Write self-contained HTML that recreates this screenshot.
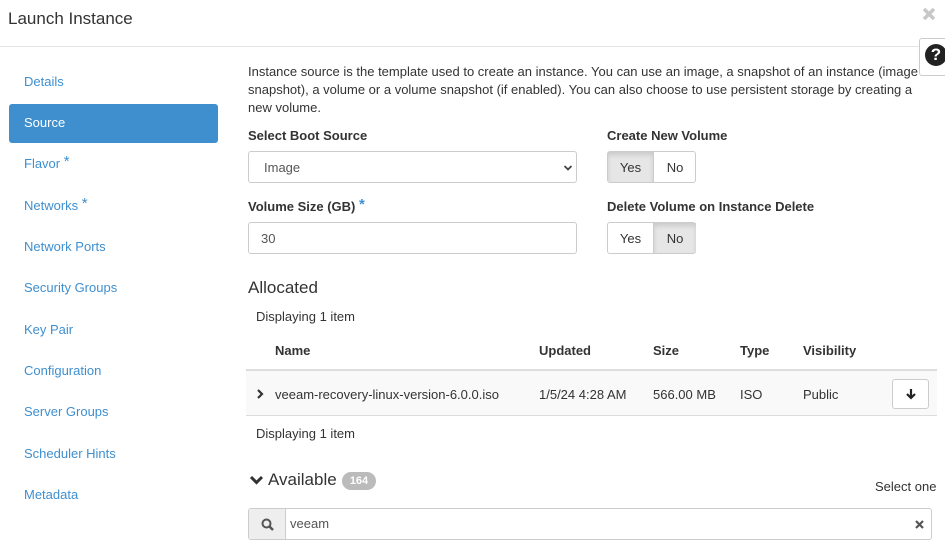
<!DOCTYPE html>
<html><head><style>
*{box-sizing:border-box;margin:0;padding:0}
body{width:945px;height:556px;overflow:hidden;background:#fff;font-family:"Liberation Sans",sans-serif;font-size:13px;color:#333;position:relative}
.a{position:absolute}
.nav{position:absolute;left:24px;color:#3f8fcf;font-size:13px}
.lbl{font-weight:bold;font-size:13px;color:#333}
.star{color:#3f8fcf;font-size:15px;vertical-align:top;position:relative;top:-3px}
.box{border:1px solid #ccc;border-radius:3px;background:#fff}
.btn{position:absolute;top:0;height:100%;display:flex;align-items:center;justify-content:center;font-size:13px}
</style></head><body>
<div class="a" style="left:8px;top:9px;font-size:17px;color:#333">Launch Instance</div>
<svg class="a" style="left:922px;top:7px" width="14" height="14"><path d="M2 2 L12 12 M12 2 L2 12" stroke="#c8c8c8" stroke-width="3.5"/></svg>
<div class="a" style="left:0;top:46px;width:920px;height:1px;background:#e5e5e5"></div>
<div class="a" style="left:919px;top:38px;width:30px;height:38px;border:1px solid #ccc;border-radius:3px;background:#fff"></div>
<div class="a" style="left:925px;top:44px;width:22px;height:22px;border-radius:50%;background:#222;color:#fff;font-weight:bold;font-size:17px;text-align:center;line-height:22px">?</div>

<div class="nav" style="top:74px">Details</div>
<div class="a" style="left:9px;top:104px;width:209px;height:39px;background:#3f8fcf;border-radius:3px"></div>
<div class="nav" style="top:115px;color:#fff">Source</div>
<div class="nav" style="top:156px">Flavor <span class="star">*</span></div>
<div class="nav" style="top:198px">Networks <span class="star">*</span></div>
<div class="nav" style="top:239px">Network Ports</div>
<div class="nav" style="top:280px">Security Groups</div>
<div class="nav" style="top:322px">Key Pair</div>
<div class="nav" style="top:363px">Configuration</div>
<div class="nav" style="top:404px">Server Groups</div>
<div class="nav" style="top:446px">Scheduler Hints</div>
<div class="nav" style="top:487px">Metadata</div>

<div class="a" style="left:248px;top:63px;width:675px;line-height:18px">Instance source is the template used to create an instance. You can use an image, a snapshot of an instance (image snapshot), a volume or a volume snapshot (if enabled). You can also choose to use persistent storage by creating a new volume.</div>

<div class="a lbl" style="left:248px;top:128px">Select Boot Source</div>
<div class="a box" style="left:248px;top:151px;width:329px;height:32px"><span class="a" style="left:15px;top:8px;color:#555">Image</span><svg class="a" style="left:314px;top:12px" width="10" height="8"><path d="M1.5 2 L5 5.5 L8.5 2" stroke="#444" stroke-width="1.8" fill="none"/></svg></div>
<div class="a lbl" style="left:607px;top:128px">Create New Volume</div>
<div class="a box" style="left:607px;top:151px;width:89px;height:32px"><div class="btn" style="left:0;width:46px;background:#e6e6e6;border-right:1px solid #ccc;box-shadow:inset 0 3px 5px rgba(0,0,0,.12)">Yes</div><div class="btn" style="left:46px;width:42px">No</div></div>

<div class="a lbl" style="left:248px;top:199px">Volume Size (GB) <span class="star">*</span></div>
<div class="a box" style="left:248px;top:222px;width:329px;height:32px"><span class="a" style="left:12px;top:8px;color:#555">30</span></div>
<div class="a lbl" style="left:607px;top:199px">Delete Volume on Instance Delete</div>
<div class="a box" style="left:607px;top:222px;width:89px;height:32px"><div class="btn" style="left:0;width:46px;border-right:1px solid #ccc">Yes</div><div class="btn" style="left:46px;width:42px;background:#e6e6e6;box-shadow:inset 0 3px 5px rgba(0,0,0,.12)">No</div></div>

<div class="a" style="left:248px;top:278px;font-size:17px">Allocated</div>
<div class="a" style="left:256px;top:309px">Displaying 1 item</div>
<div class="a lbl" style="left:275px;top:343px">Name</div>
<div class="a lbl" style="left:539px;top:343px">Updated</div>
<div class="a lbl" style="left:653px;top:343px">Size</div>
<div class="a lbl" style="left:740px;top:343px">Type</div>
<div class="a lbl" style="left:803px;top:343px">Visibility</div>
<div class="a" style="left:246px;top:369px;width:691px;height:2px;background:#ddd"></div>
<div class="a" style="left:246px;top:371px;width:691px;height:45px;background:#f9f9f9;border-bottom:1px solid #ddd"></div>
<svg class="a" style="left:256px;top:388px" width="8" height="12"><path d="M2 2 L6 6 L2 10" stroke="#333" stroke-width="2.2" fill="none"/></svg>
<div class="a" style="left:275px;top:387px">veeam-recovery-linux-version-6.0.0.iso</div>
<div class="a" style="left:539px;top:387px">1/5/24 4:28 AM</div>
<div class="a" style="left:653px;top:387px">566.00 MB</div>
<div class="a" style="left:740px;top:387px">ISO</div>
<div class="a" style="left:803px;top:387px">Public</div>
<div class="a box" style="left:892px;top:379px;width:37px;height:30px"><svg class="a" style="left:12px;top:8px" width="12" height="12"><path d="M6 1 V10 M2 6 L6 10 L10 6" stroke="#222" stroke-width="2.2" fill="none"/></svg></div>
<div class="a" style="left:256px;top:426px">Displaying 1 item</div>

<svg class="a" style="left:249px;top:474px" width="15" height="12"><path d="M2 3 L7.5 8.5 L13 3" stroke="#333" stroke-width="3" fill="none"/></svg>
<div class="a" style="left:268px;top:470px;font-size:17px">Available</div>
<div class="a" style="left:342px;top:472px;width:34px;height:18px;border-radius:9px;background:#bbb;color:#fff;font-size:11px;font-weight:bold;text-align:center;line-height:18px">164</div>
<div class="a" style="left:875px;top:479px">Select one</div>
<div class="a box" style="left:248px;top:508px;width:684px;height:32px;overflow:hidden">
<div class="a" style="left:0;top:0;width:37px;height:30px;background:#eee;border-right:1px solid #ccc"><svg class="a" style="left:12px;top:9px" width="14" height="14"><circle cx="5.5" cy="5.5" r="4" stroke="#555" stroke-width="2" fill="none"/><path d="M8.5 8.5 L12 12" stroke="#555" stroke-width="2.5"/></svg></div>
<span class="a" style="left:41px;top:7px;color:#555">veeam</span>
<svg class="a" style="left:666px;top:11px" width="9" height="9"><path d="M1 1 L8 8 M8 1 L1 8" stroke="#555" stroke-width="2.2"/></svg>
</div>
</body></html>
